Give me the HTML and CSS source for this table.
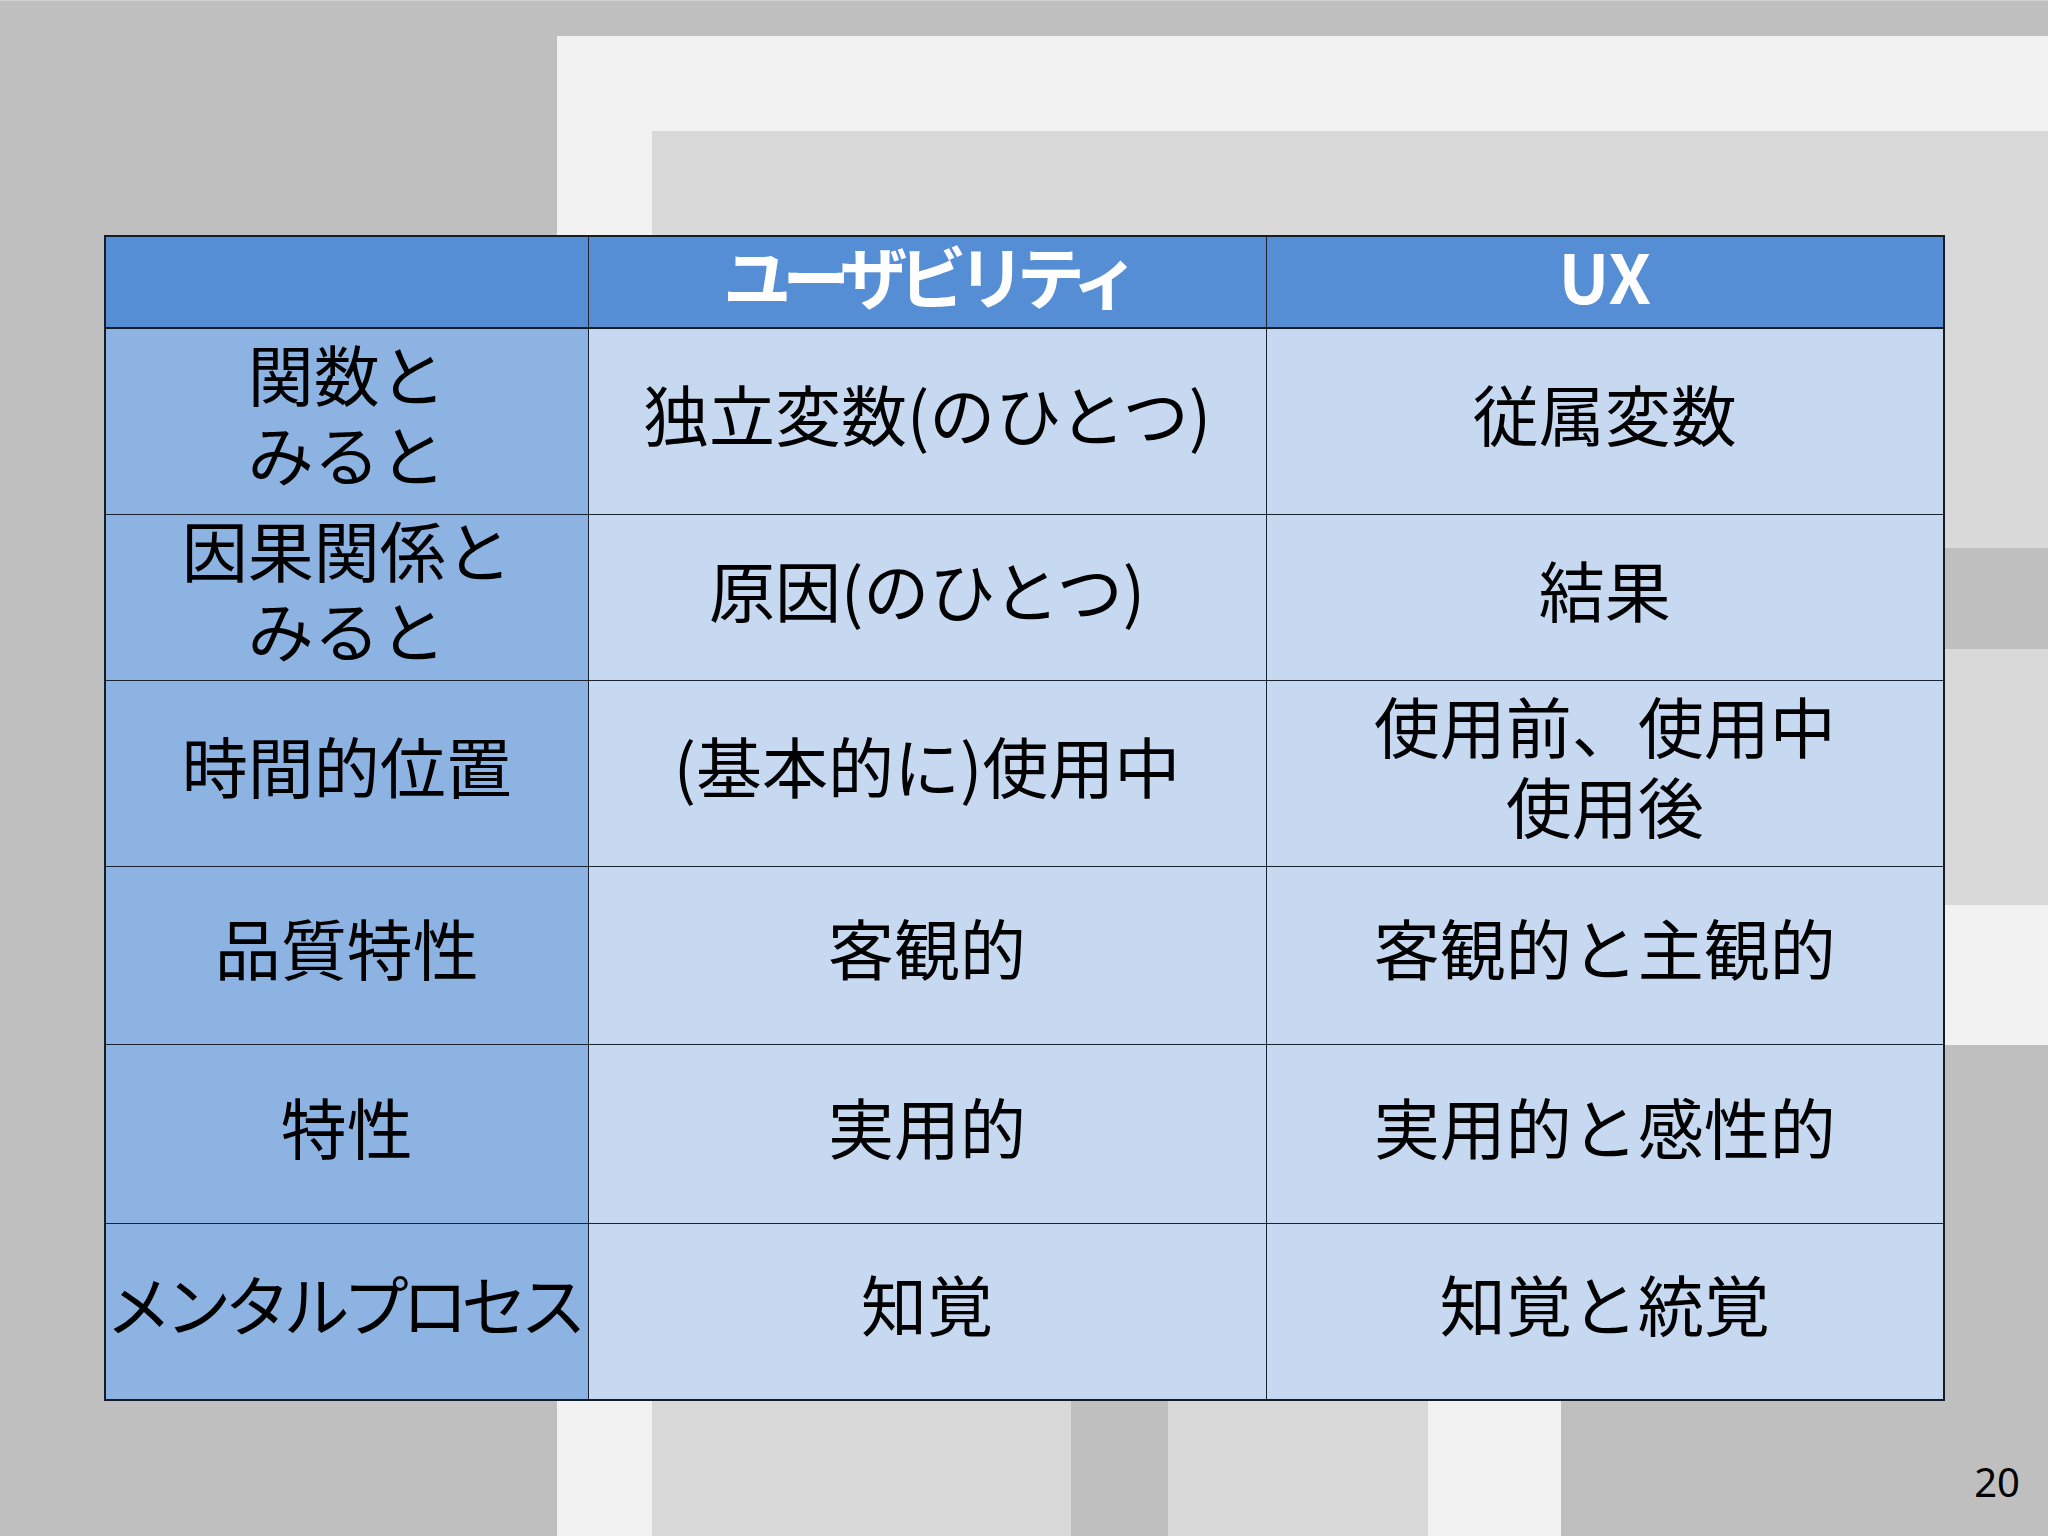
FILE: index.html
```html
<!DOCTYPE html>
<html lang="ja">
<head>
<meta charset="utf-8">
<title>ユーザビリティとUX</title>
<link rel="stylesheet" href="styles.css">
</head>
<body>
<div class="slide">
  <div class="deco deco-top-line"></div>
  <div class="deco deco-white-main"></div>
  <div class="deco deco-gray-main"></div>
  <div class="deco deco-right-dark"></div>
  <div class="deco deco-right-white"></div>
  <div class="deco deco-right-low"></div>
  <div class="deco deco-bottom-dark"></div>

  <div class="content">
    <table class="compare">
      <colgroup>
        <col class="c-label">
        <col class="c-val">
        <col class="c-val">
      </colgroup>
      <thead>
        <tr class="r-head">
          <th class="corner"></th>
          <th><span class="txt"><span class="kana-tight">ユーザビリティ</span></span></th>
          <th><span class="txt">UX</span></th>
        </tr>
      </thead>
      <tbody>
        <tr class="r1">
          <td class="label"><span class="txt">関数と<br>みると</span></td>
          <td><span class="txt">独立変数(のひとつ)</span></td>
          <td><span class="txt">従属変数</span></td>
        </tr>
        <tr class="r2">
          <td class="label"><span class="txt">因果関係と<br>みると</span></td>
          <td><span class="txt">原因(のひとつ)</span></td>
          <td><span class="txt">結果</span></td>
        </tr>
        <tr class="r3">
          <td class="label"><span class="txt">時間的位置</span></td>
          <td><span class="txt">(基本的に)使用中</span></td>
          <td><span class="txt">使用前、使用中<br>使用後</span></td>
        </tr>
        <tr class="r4">
          <td class="label"><span class="txt">品質特性</span></td>
          <td><span class="txt">客観的</span></td>
          <td><span class="txt">客観的と主観的</span></td>
        </tr>
        <tr class="r5">
          <td class="label"><span class="txt">特性</span></td>
          <td><span class="txt">実用的</span></td>
          <td><span class="txt">実用的と感性的</span></td>
        </tr>
        <tr class="r6">
          <td class="label"><span class="txt"><span class="squeeze">メンタルプロセス</span></span></td>
          <td><span class="txt">知覚</span></td>
          <td><span class="txt">知覚と統覚</span></td>
        </tr>
      </tbody>
    </table>
    <div class="pagenum">20</div>
  </div>
</div>
</body>
</html>
```

FILE: styles.css
```css
html, body {
  margin: 0;
  padding: 0;
}

body {
  background: #bfbfbf;
  font-family: "Noto Sans CJK JP", "Noto Sans", sans-serif;
  color: #000;
}

.slide {
  position: relative;
  width: 2048px;
  height: 1536px;
  overflow: hidden;
  background: #bfbfbf;
}

/* decorative background panels */
.deco {
  position: absolute;
}

.deco-top-line {
  left: 0;
  top: 0;
  right: 0;
  height: 1px;
  background: #d4d4d4;
}

.deco-white-main {
  left: 557px;
  top: 36px;
  right: 0;
  bottom: 0;
  background: #f2f2f2;
}

.deco-gray-main {
  left: 652px;
  top: 131px;
  right: 0;
  bottom: 0;
  background: #d9d9d9;
}

.deco-right-dark {
  left: 1900px;
  top: 548px;
  right: 0;
  height: 101px;
  background: #bfbfbf;
}

.deco-right-white {
  left: 1428px;
  top: 905px;
  right: 0;
  bottom: 0;
  background: #f2f2f2;
}

.deco-right-low {
  left: 1561px;
  top: 1045px;
  right: 0;
  bottom: 0;
  background: #bfbfbf;
}

.deco-bottom-dark {
  left: 1071px;
  top: 1300px;
  width: 97px;
  bottom: 0;
  background: #bfbfbf;
}

/* content */
.content {
  position: relative;
  display: flex;
  flex-direction: column;
  padding: 235px 0 0 104px;
}

.compare {
  border-collapse: collapse;
  table-layout: fixed;
  width: 1840px;
  border: 2px solid #141c26;
}

.c-label {
  width: 483px;
}

.c-val {
  width: 678px;
}

.compare th,
.compare td {
  padding: 0;
  border: 1px solid #1a2430;
  text-align: center;
  vertical-align: middle;
  font-size: 66px;
  line-height: 80px;
  font-weight: 400;
  white-space: nowrap;
}

/* lift the glyphs so they sit optically centred in the cell */
.txt {
  display: block;
  margin-top: -18px;
}

.compare th {
  background: #558ed5;
  color: #fff;
  font-weight: 700;
  font-size: 68px;
  border-bottom: 2px solid #141c26;
}

.compare th .txt {
  margin-top: -14px;
}

.compare td {
  background: #c6d9f1;
}

.compare td.label {
  background: #8db3e2;
}

.kana-tight {
  letter-spacing: -9px;
}

.squeeze {
  letter-spacing: -6.8px;
  margin-right: 14px;
}

.r-head { height: 92px; }
.r1 { height: 186px; }
.r2 { height: 166px; }
.r3 { height: 186px; }
.r4 { height: 178px; }
.r5 { height: 179px; }
.r6 { height: 177px; }

.pagenum {
  align-self: flex-end;
  margin: 61px 28px 0 0;
  font-family: "Noto Sans", sans-serif;
  font-size: 40px;
  line-height: 40px;
}
```
